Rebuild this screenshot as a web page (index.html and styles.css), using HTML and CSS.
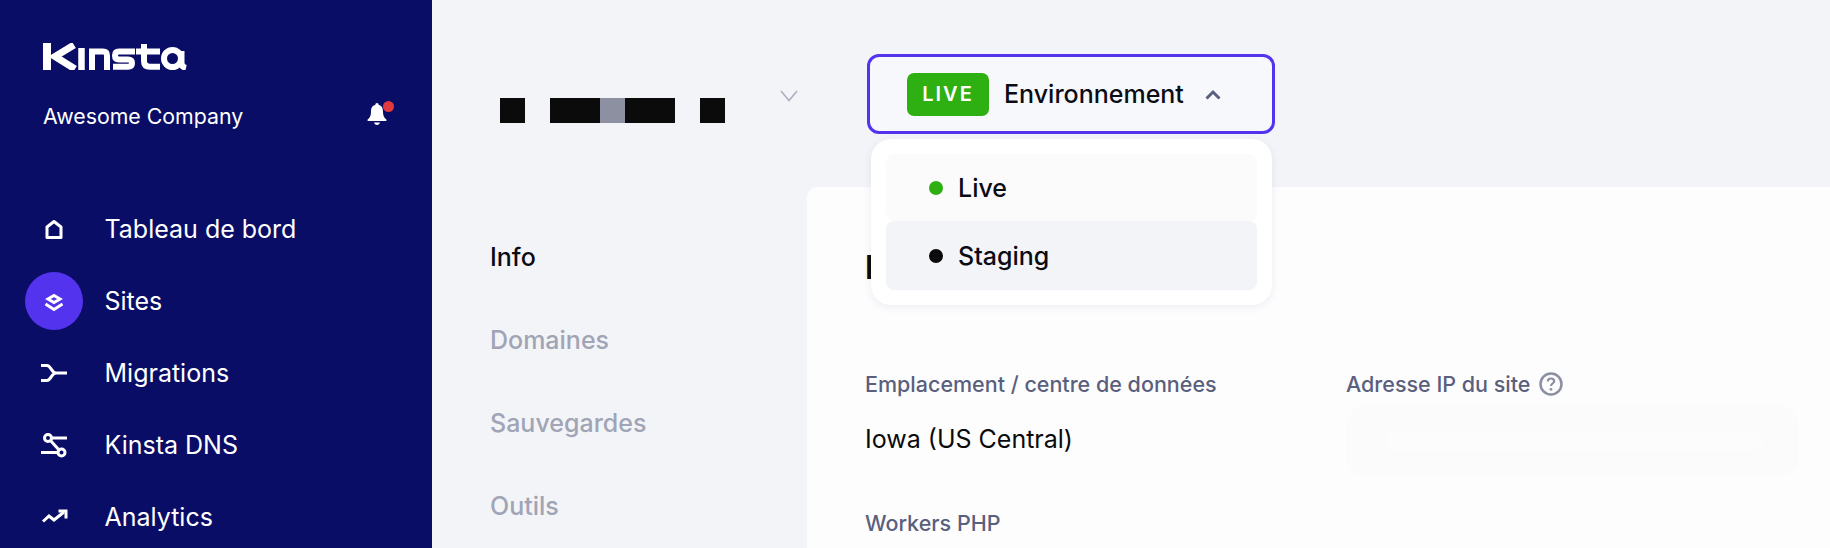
FILE: index.html
```html
<!DOCTYPE html>
<html lang="fr">

<head>
  <meta charset="UTF-8">
  <meta name="viewport" content="width=device-width, initial-scale=1.0">
  <title>Kinsta - Info</title>
  <link rel="stylesheet" href="styles.css">
</head>

<body>

  <aside class="sidebar">
    <svg class="logo" viewBox="0 0 144 27" role="img" aria-label="Kinsta">
      <g fill="none" stroke="#fff" stroke-width="6">
        <path d="M4 0V27" stroke-width="8" />
        <path d="M31 2L12 13.500L32 26" stroke-width="7" />
        <path d="M38.500 5V27" stroke-width="6.500" />
        <path d="M49 27V8.500H60Q64 8.500 64 12.500V27" />
        <path d="M92 8.500H76Q72 8.500 72 12.500Q72 16.500 76 16.500H85Q89 16.500 89 20Q89 23.800 85 23.800H70" />
        <path d="M93 8.500H117M101 1V18Q101 23.800 107 23.800H117" />
        <circle cx="129.500" cy="15.500" r="8.500" />
        <path d="M138.500 8V20Q138.500 24 143 25" />
      </g>
    </svg>
    <div class="company">
      <span class="company-name">Awesome Company</span>
      <span class="bell">
        <svg viewBox="0 0 20 24" width="20" height="24">
          <path fill="#fff" d="M10 1a1.600 1.600 0 0 1 1.600 1.800C15 3.600 16 6.500 16 10c0 4 1.200 5.800 3.400 7.500V19H.6v-1.500C2.800 15.800 4 14 4 10c0-3.500 1-6.400 4.400-7.200A1.600 1.600 0 0 1 10 1zM7 20.500h6c-.4 1.500-1.500 2.500-3 2.500s-2.600-1-3-2.500z" />
        </svg>
        <span class="bell-dot"></span>
      </span>
    </div>
    <nav class="side-nav">
      <a class="side-item">
        <span class="side-icon">
          <svg viewBox="0 0 24 24" width="24" height="24" fill="none" stroke="#fff" stroke-width="3">
            <path d="M5 20.500V10L12 4.500L19 10V20.500Z" stroke-linejoin="round" />
          </svg>
        </span>
        Tableau de bord
      </a>
      <a class="side-item active">
        <span class="side-icon">
          <svg viewBox="0 0 24 24" width="24" height="24" fill="none" stroke="#fff" stroke-width="3">
            <path d="M12 6.500L18 10L12 13.500L6 10Z" />
            <path d="M3.500 15L12 20.500L20.500 15" />
          </svg>
        </span>
        Sites
      </a>
      <a class="side-item">
        <span class="side-icon">
          <svg viewBox="0 0 28 24" width="28" height="24" fill="none" stroke="#fff" stroke-width="3">
            <path d="M1 4.500H7C11 4.500 11.500 12 16 12H27M1 19.500H7C11 19.500 11.500 12 16 12" />
          </svg>
        </span>
        Migrations
      </a>
      <a class="side-item">
        <span class="side-icon">
          <svg viewBox="0 0 28 28" width="28" height="28" fill="none" stroke="#fff" stroke-width="3">
            <circle cx="8" cy="7" r="3.500" />
            <circle cx="21.500" cy="21.500" r="3.500" />
            <path d="M12 7H27M1 21.500H17M10.500 9.500L19 19" />
          </svg>
        </span>
        Kinsta DNS
      </a>
      <a class="side-item">
        <span class="side-icon">
          <svg viewBox="0 0 28 24" width="28" height="24" fill="none" stroke="#fff" stroke-width="3">
            <path d="M3 16.500L9 11L14 15L24 7" />
            <path d="M18.500 6H26V13.500" />
          </svg>
        </span>
        Analytics
      </a>
    </nav>
  </aside>

  <div class="main">
    <header class="topbar">
      <div class="site-name">
        <span class="block"></span>
        <span class="block-gap"></span>
        <span class="block wide"></span>
        <span class="block grey"></span>
        <span class="block wide"></span>
        <span class="block-gap"></span>
        <span class="block"></span>
      </div>
      <svg class="site-chevron" viewBox="0 0 18 12" width="18" height="12" fill="none" stroke="#a9adbd" stroke-width="1.500">
        <path d="M1 1L9 10.500L17 1" />
      </svg>
      <div class="env">
        <button class="env-button">
          <span class="badge">LIVE</span>
          <span class="env-label">Environnement</span>
          <svg viewBox="0 0 16 11" width="16" height="11" fill="none" stroke="#5a5f7d" stroke-width="3">
            <path d="M1.500 9.500L8 3L14.500 9.500" />
          </svg>
        </button>
        <ul class="env-menu">
          <li class="env-option"><span class="dot green"></span>Live</li>
          <li class="env-option current"><span class="dot"></span>Staging</li>
        </ul>
      </div>
    </header>

    <div class="content">
      <nav class="tabs">
        <a class="tab selected">Info</a>
        <a class="tab">Domaines</a>
        <a class="tab">Sauvegardes</a>
        <a class="tab">Outils</a>
      </nav>
      <section class="card">
        <h2>I</h2>
        <div class="fields">
          <div class="field">
            <div class="field-label">Emplacement / centre de données</div>
            <div class="field-value">Iowa (US Central)</div>
          </div>
          <div class="field">
            <div class="field-label">
              Adresse IP du site
              <svg viewBox="0 0 24 24" width="24" height="24" fill="none" stroke="#8b8fa3" stroke-width="2.500">
                <circle cx="12" cy="12" r="10.500" />
                <path d="M8.800 9.500C8.800 7.600 10.300 6.500 12 6.500C13.800 6.500 15.200 7.600 15.200 9.300C15.200 11.500 12 11.500 12 14" stroke-width="2.200" />
                <circle cx="12" cy="17.300" r="1.400" fill="#8b8fa3" stroke="none" />
              </svg>
            </div>
            <div class="ip-mask"><span class="ip-blur"></span></div>
          </div>
          <div class="field">
            <div class="field-label">Workers PHP</div>
          </div>
        </div>
      </section>
    </div>
  </div>

</body>

</html>
```

FILE: styles.css
```css
body {
  margin: 0;
  padding: 0;
  height: 548px;
  overflow: hidden;
  display: flex;
  font-family: 'Inter', sans-serif;
  background-color: #f3f4f8;
  color: #0b0c14;
}

/* sidebar */
.sidebar {
  width: 432px;
  height: 548px;
  flex-shrink: 0;
  background: #0a0d66;
  color: #ffffff;
}

.logo {
  display: block;
  width: 144px;
  height: 27px;
  margin: 43px 0 0 43px;
}

.company {
  display: flex;
  align-items: center;
  justify-content: space-between;
  margin: 31px 45px 0 43px;
  height: 30px;
}

.company-name {
  font-size: 21.3px;
}

.bell {
  position: relative;
  display: block;
  width: 20px;
  height: 24px;
  margin-top: -5px;
}

.bell-dot {
  position: absolute;
  top: -1px;
  right: -7px;
  width: 11px;
  height: 11px;
  border-radius: 50%;
  background: #e23a3f;
}

.side-nav {
  display: flex;
  flex-direction: column;
  gap: 14px;
  margin: 69px 0 0 25px;
}

.side-item {
  display: flex;
  align-items: center;
  gap: 21.5px;
  height: 58px;
  font-size: 25px;
}

.side-icon {
  width: 58px;
  height: 58px;
  border-radius: 50%;
  display: flex;
  align-items: center;
  justify-content: center;
}

.active .side-icon {
  background: #5333ed;
}

/* top bar */
.main {
  flex: 1;
  min-width: 0;
}

.topbar {
  display: flex;
  align-items: flex-start;
  height: 80px;
  padding-top: 54px;
}

.site-name {
  display: flex;
  margin: 44px 0 0 68px;
}

.block {
  width: 25px;
  height: 25px;
  background: #0b0b0b;
}

.block.wide {
  width: 50px;
}

.block.grey {
  background: #8d90a0;
}

.block-gap {
  width: 25px;
}

.site-chevron {
  margin: 36px 0 0 55px;
}

.env {
  position: relative;
  margin-left: 69px;
}

.env-button {
  display: flex;
  align-items: center;
  box-sizing: border-box;
  width: 408px;
  height: 80px;
  padding: 0 0 0 37px;
  border: 3px solid #5333ed;
  border-radius: 12px;
  background: #f7f8fb;
  font-family: inherit;
  color: #0b0c14;
}

.badge {
  width: 82px;
  height: 43px;
  line-height: 43px;
  border-radius: 7px;
  background: #2fb012;
  color: #ffffff;
  font-size: 20px;
  font-weight: 600;
  letter-spacing: 2px;
  text-align: center;
}

.env-label {
  margin: 0 21px 0 15px;
  font-size: 25px;
  font-weight: 500;
}

.env-menu {
  position: absolute;
  top: 85px;
  left: 4px;
  box-sizing: border-box;
  width: 401px;
  margin: 0;
  padding: 15px;
  list-style: none;
  background: #ffffff;
  border-radius: 20px;
  box-shadow: 0 2px 8px rgba(60, 64, 110, 0.09);
}

.env-option {
  display: flex;
  align-items: center;
  gap: 15px;
  height: 67px;
  padding-left: 43px;
  border-radius: 8px;
  background: #fbfbfc;
  font-size: 25px;
  font-weight: 500;
}

.env-option.current {
  height: 69px;
  background: #f3f4f8;
}

.dot {
  width: 14px;
  height: 14px;
  border-radius: 50%;
  background: #0b0b0b;
}

.dot.green {
  background: #2fb012;
}

/* content */
.content {
  display: flex;
  margin-top: 53px;
}

.tabs {
  width: 317px;
  padding: 56px 0 0 58px;
  display: flex;
  flex-direction: column;
  gap: 54px;
  flex-shrink: 0;
}

.tab {
  height: 29px;
  line-height: 29px;
  font-size: 25px;
  font-weight: 500;
  color: #a0a4b5;
}

.tab.selected {
  color: #0b0c14;
}

.card {
  flex: 1;
  height: 361px;
  padding: 0 37px 0 58px;
  background: #fdfdfe;
  border-top-left-radius: 10px;
}

.card h2 {
  margin: 60px 0 0 0;
  font-size: 33px;
  line-height: 40px;
  font-weight: 700;
  color: #0b0b0b;
}

.fields {
  display: grid;
  grid-template-columns: 481px 453px;
  row-gap: 34px;
  margin-top: 85px;
}

.field-label {
  display: flex;
  align-items: center;
  gap: 8px;
  height: 24px;
  font-size: 21.5px;
  font-weight: 500;
  color: #5a5f7d;
}

.field-value {
  margin-top: 28px;
  font-size: 25px;
  line-height: 30px;
  color: #0b0b0b;
}

.ip-mask {
  display: flex;
  align-items: center;
  height: 72px;
  margin-top: 9px;
  padding: 0 36px 0 40px;
  border-radius: 22px;
  background: #fbfbfc;
}

.ip-blur {
  flex: 1;
  height: 20px;
  border-radius: 10px;
  background: #fcfcfd;
}
```
